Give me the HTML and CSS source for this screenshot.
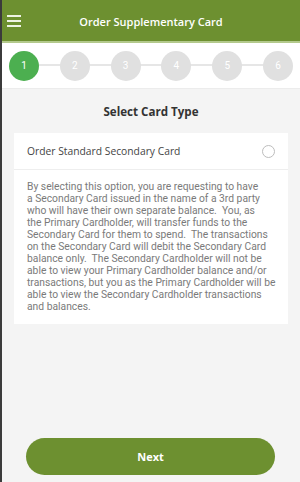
FILE: index.html
```html
<!DOCTYPE html>
<html>
<head>
<meta charset="utf-8">
<link rel="stylesheet" href="styles.css">
</head>
<body>
<div class="app">
  <header class="topbar">
    <div class="menu"><span></span><span></span><span></span></div>
    <div class="title">Order Supplementary Card</div>
  </header>
  <div class="stepper">
    <div class="track"></div>
    <div class="step active">1</div>
    <div class="step">2</div>
    <div class="step">3</div>
    <div class="step">4</div>
    <div class="step">5</div>
    <div class="step">6</div>
  </div>
  <main class="content">
    <h2 class="heading">Select Card Type</h2>
    <div class="card">
      <div class="option">
        <span class="option-label">Order Standard Secondary Card</span>
        <span class="radio"></span>
      </div>
      <p class="desc">By selecting this option, you are requesting to have<br>a Secondary Card issued in the name of a 3rd party<br>who will have their own separate balance.&nbsp; You, as<br>the Primary Cardholder, will transfer funds to the<br>Secondary Card for them to spend.&nbsp; The transactions<br>on the Secondary Card will debit the Secondary Card<br>balance only.&nbsp; The Secondary Cardholder will not be<br>able to view your Primary Cardholder balance and/or<br>transactions, but you as the Primary Cardholder will be<br>able to view the Secondary Cardholder transactions<br>and balances.</p>
    </div>
  </main>
  <footer class="footer">
    <button class="next">Next</button>
  </footer>
</div>
</body>
</html>
```
FILE: styles.css
```css
html, body {
  margin: 0;
  padding: 0;
  height: 100%;
}
body {
  background: #f4f4f4;
  font-family: "Open Sans", "Noto Sans", sans-serif;
  border-left: 2px solid #3b3b3b;
  box-sizing: border-box;
}
.app {
  display: flex;
  flex-direction: column;
  height: 100%;
}
.topbar {
  height: 41px;
  background: #6d9030;
  border-bottom: 2px solid #b3c98c;
  display: flex;
  align-items: center;
  justify-content: center;
  position: relative;
  flex-shrink: 0;
}
.menu {
  position: absolute;
  left: 5px;
  top: 15px;
  width: 14px;
  display: flex;
  flex-direction: column;
  gap: 3.3px;
}
.menu span {
  display: block;
  height: 1.8px;
  background: #eef3e4;
}
.title {
  color: #fff;
  font-size: 11px;
  font-weight: 600;
  margin-top: 1px;
}
.stepper {
  background: #fff;
  height: 45px;
  border-bottom: 1px solid #ececec;
  display: flex;
  justify-content: space-between;
  align-items: center;
  padding: 0 7px;
  position: relative;
  flex-shrink: 0;
}
.track {
  position: absolute;
  left: 22px;
  right: 22px;
  top: 21px;
  height: 1.5px;
  background: #e6e6e6;
}
.step {
  width: 30px;
  height: 30px;
  border-radius: 50%;
  background: #e0e0e0;
  color: #fff;
  font-family: Roboto, sans-serif;
  font-size: 10px;
  display: flex;
  align-items: center;
  justify-content: center;
  position: relative;
}
.step.active {
  background: #4caf50;
}
.content {
  flex: 1;
  padding: 0 12px;
}
.heading {
  margin: 14px 0 13px;
  text-align: center;
  font-size: 11.6px;
  font-weight: 700;
  color: #333;
  line-height: 17px;
}
.card {
  background: #fff;
}
.option {
  height: 36px;
  border-bottom: 1px solid #eeeeee;
  display: flex;
  align-items: center;
  justify-content: space-between;
  padding: 0 13px;
}
.option-label {
  font-size: 10.3px;
  color: #444;
}
.radio {
  width: 11px;
  height: 11px;
  border: 1.7px solid #bdbdbd;
  border-radius: 50%;
}
.desc {
  margin: 0;
  padding: 11px 13px 11px;
  font-family: Roboto, sans-serif;
  font-size: 10.3px;
  line-height: 12px;
  color: #7a7a7a;
  white-space: nowrap;
}
.footer {
  padding: 0 25px 7px 24px;
  flex-shrink: 0;
}
.next {
  display: block;
  width: 100%;
  height: 37px;
  border: none;
  border-radius: 19px;
  background: #6d9030;
  color: #fff;
  font-family: "Open Sans", sans-serif;
  font-size: 11px;
  font-weight: 700;
}
```
